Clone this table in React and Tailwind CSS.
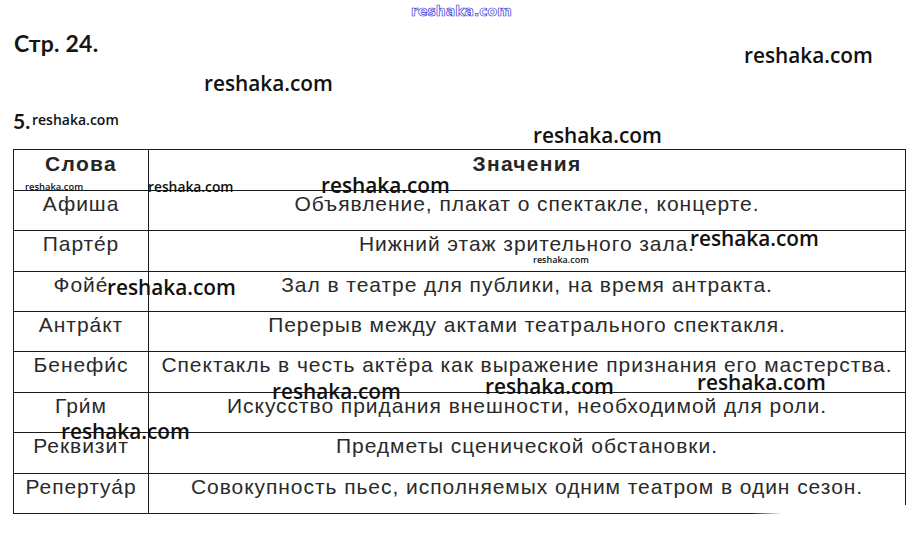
import React from "react";

const rows = [
    { word: "Афиша", meaning: "Объявление, плакат о спектакле, концерте.", h: "h-[40px]" },
    { word: "Парте́р", meaning: "Нижний этаж зрительного зала.", h: "h-[41px]" },
    { word: "Фойе́", meaning: "Зал в театре для публики, на время антракта.", h: "h-[40px]" },
    { word: "Антра́кт", meaning: "Перерыв между актами театрального спектакля.", h: "h-[40px]" },
    { word: "Бенефи́с", meaning: "Спектакль в честь актёра как выражение признания его мастерства.", h: "h-[41px]" },
    { word: "Гри́м", meaning: "Искусство придания внешности, необходимой для роли.", h: "h-[40px]" },
    { word: "Реквизит", meaning: "Предметы сценической обстановки.", h: "h-[41px]" },
];

const lastRow = { word: "Репертуа́р", meaning: "Совокупность пьес, исполняемых одним театром в один сезон." };

// watermarks sit on top of the scan, so they are placed absolutely
const marks = [
    { cls: "left-[744px] top-[45px] text-[20.8px]" },
    { cls: "left-[204px] top-[73px] text-[20.8px]" },
    { cls: "left-[32px] top-[113px] text-[14px]" },
    { cls: "left-[533px] top-[125px] text-[20.8px]" },
    { cls: "left-[321px] top-[175px] text-[20.8px]" },
    { cls: "left-[25px] top-[182px] text-[9.4px]" },
    { cls: "left-[148px] top-[180px] text-[13.8px]" },
    { cls: "left-[690px] top-[228px] text-[20.8px]" },
    { cls: "left-[533px] top-[255px] text-[9px]" },
    { cls: "left-[107px] top-[277px] text-[20.8px]" },
    { cls: "left-[272px] top-[381px] text-[20.8px]" },
    { cls: "left-[485px] top-[376px] text-[20.8px]" },
    { cls: "left-[697px] top-[372px] text-[20.8px]" },
    { cls: "left-[61px] top-[421px] text-[20.8px]" },
];

export default function App() {
    return (
        <div className="relative w-[917px] h-[559px] overflow-hidden bg-white text-[#1c1c1c]">
            <div className="pt-[29px] pl-[13px]">
                <div className="ml-px font-['Lato',sans-serif] font-bold text-[23px] leading-[28px] tracking-[0.2px] text-[#161616]">Стр. 24.</div>
                <div className="mt-[52px] font-['Lato',sans-serif] font-bold text-[21px] leading-[24px] text-[#161616]">5.</div>

                <div className="mt-[16px] w-[893px] font-['Liberation_Sans',Arial,sans-serif] text-[21px] leading-[24px] tracking-[0.95px]">
                    <div className="border-l border-r border-[#1a1a1a]">
                        <div className="flex h-[41px] border-t border-[#1a1a1a] font-bold tracking-[1.3px] text-[#262626]">
                            <div className="w-[135px] shrink-0 border-r border-[#1a1a1a] pt-[2px] text-center">Слова</div>
                            <div className="flex-1 pt-[2px] text-center">Значения</div>
                        </div>
                        {rows.map((row, i) => (
                            <div key={i} className={"flex border-t border-[#1a1a1a] " + row.h}>
                                <div className="w-[135px] shrink-0 border-r border-[#1a1a1a] pt-[1px] text-center text-[#2a2a2a]">{row.word}</div>
                                <div className="flex-1 pt-[1px] text-center text-[#2a2a2a]">{row.meaning}</div>
                            </div>
                        ))}
                    </div>
                    <div className="flex h-[40px] border-t border-l border-[#1a1a1a]">
                        <div className="w-[135px] shrink-0 border-r border-[#1a1a1a] pt-[1px] text-center text-[#2a2a2a]">{lastRow.word}</div>
                        <div className="flex-1 pt-[1px] text-center text-[#2a2a2a]">{lastRow.meaning}</div>
                        <div className="w-px h-[31px] bg-[#1a1a1a]"></div>
                    </div>
                    <div className="w-[769px] h-px bg-[linear-gradient(to_right,#1a1a1a_96%,transparent)]"></div>
                </div>
            </div>

            <div className="absolute left-[411px] top-[4px] font-['DejaVu_Sans',sans-serif] font-bold text-[14px] leading-[15px] text-white [-webkit-text-stroke:0.7px_#3c3cd8]">
                reshaka.com
            </div>

            {marks.map((m, i) => (
                <div key={i} className={"absolute leading-none font-['Open_Sans',sans-serif] font-semibold text-[#111] whitespace-nowrap " + m.cls}>
                    reshaka.com
                </div>
            ))}
        </div>
    );
}
